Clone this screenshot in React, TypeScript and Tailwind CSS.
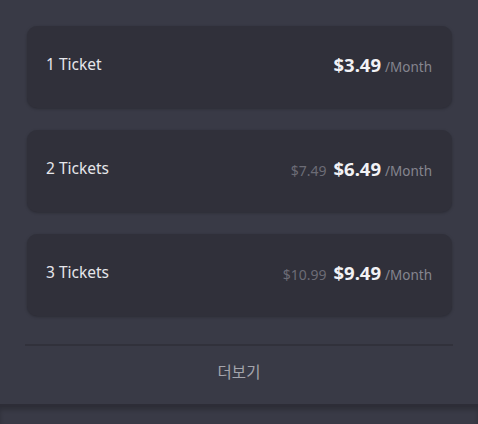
import React from "react";

const rows = [
  { name: "1 Ticket", old: null, price: "$3.49" },
  { name: "2 Tickets", old: "$7.49", price: "$6.49" },
  { name: "3 Tickets", old: "$10.99", price: "$9.49" },
];

export default function App() {
  return (
    <div
      className="w-[478px] h-[424px] flex flex-col bg-[#393a46] overflow-hidden"
      style={{ fontFamily: '"Noto Sans", "Noto Sans CJK KR", sans-serif' }}
    >
      <div className="flex flex-col gap-[22px] pl-[27px] pr-[26px] pt-[26px]">
        {rows.map((r) => (
          <div
            key={r.name}
            className="h-[82px] rounded-[10px] bg-[#30303a] shadow-[0_1px_3px_rgba(0,0,0,0.25)] flex items-center justify-between pl-[19px] pr-[20px] pb-[4px]"
          >
            <span className="text-[15.5px] text-[#e6e6ea]">{r.name}</span>
            <div className="flex items-baseline">
              {r.old && (
                <span className="text-[14px] text-[#6c6c76] mr-[7px]">{r.old}</span>
              )}
              <span className="text-[18.5px] font-bold text-[#f2f2f5]">{r.price}</span>
              <span className="text-[13.5px] text-[#85858f] ml-[4px]">/Month</span>
            </div>
          </div>
        ))}
      </div>
      <div className="mt-[28px] mx-[25px] h-[2px] bg-[#31313b]" />
      <div className="h-[58px] flex items-center justify-center pb-[4px]">
        <span className="text-[15.5px] text-[#a4a4ac]">더보기</span>
      </div>
      <div className="flex-1 bg-[#393a46] border-t-[3px] border-[#2d2d37] shadow-[inset_0_3px_4px_rgba(0,0,0,0.2)]" />
    </div>
  );
}
